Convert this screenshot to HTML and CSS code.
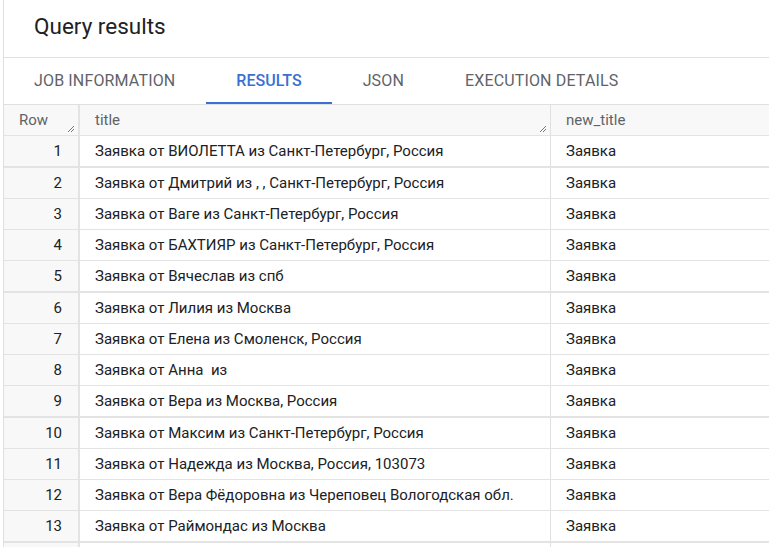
FILE: index.html
```html
<!DOCTYPE html>
<html lang="ru">
<head>
<meta charset="utf-8">
<title>Query results</title>
<link rel="stylesheet" href="styles.css">
</head>
<body>
<div class="page">
  <header class="title-bar"><h1 class="title">Query results</h1></header>
  <nav class="tabs">
    <div class="tab">JOB INFORMATION</div>
    <div class="tab active">RESULTS</div>
    <div class="tab">JSON</div>
    <div class="tab">EXECUTION DETAILS</div>
  </nav>
  <div class="grid">
    <div class="row head">
      <div class="cell num">Row<svg class="grip" width="8" height="8" viewBox="0 0 8 8"><path d="M1 7L7 1M4 7L7 4" stroke="#777" stroke-width="1"/></svg></div>
      <div class="cell txt">title<svg class="grip" width="8" height="8" viewBox="0 0 8 8"><path d="M1 7L7 1M4 7L7 4" stroke="#777" stroke-width="1"/></svg></div>
      <div class="cell txt last">new_title</div>
    </div>
    <div class="row thick"><div class="cell num">1</div><div class="cell txt">Заявка от ВИОЛЕТТА из Санкт-Петербург, Россия</div><div class="cell txt last">Заявка</div></div>
    <div class="row"><div class="cell num">2</div><div class="cell txt">Заявка от Дмитрий из , , Санкт-Петербург, Россия</div><div class="cell txt last">Заявка</div></div>
    <div class="row"><div class="cell num">3</div><div class="cell txt">Заявка от Ваге из Санкт-Петербург, Россия</div><div class="cell txt last">Заявка</div></div>
    <div class="row"><div class="cell num">4</div><div class="cell txt">Заявка от БАХТИЯР из Санкт-Петербург, Россия</div><div class="cell txt last">Заявка</div></div>
    <div class="row thick"><div class="cell num">5</div><div class="cell txt">Заявка от Вячеслав из спб</div><div class="cell txt last">Заявка</div></div>
    <div class="row"><div class="cell num">6</div><div class="cell txt">Заявка от Лилия из Москва</div><div class="cell txt last">Заявка</div></div>
    <div class="row"><div class="cell num">7</div><div class="cell txt">Заявка от Елена из Смоленск, Россия</div><div class="cell txt last">Заявка</div></div>
    <div class="row"><div class="cell num">8</div><div class="cell txt">Заявка от Анна&nbsp; из</div><div class="cell txt last">Заявка</div></div>
    <div class="row thick"><div class="cell num">9</div><div class="cell txt">Заявка от Вера из Москва, Россия</div><div class="cell txt last">Заявка</div></div>
    <div class="row"><div class="cell num">10</div><div class="cell txt">Заявка от Максим из Санкт-Петербург, Россия</div><div class="cell txt last">Заявка</div></div>
    <div class="row"><div class="cell num">11</div><div class="cell txt">Заявка от Надежда из Москва, Россия, 103073</div><div class="cell txt last">Заявка</div></div>
    <div class="row"><div class="cell num">12</div><div class="cell txt">Заявка от Вера Фёдоровна из Череповец Вологодская обл.</div><div class="cell txt last">Заявка</div></div>
    <div class="row thick"><div class="cell num">13</div><div class="cell txt">Заявка от Раймондас из Москва</div><div class="cell txt last">Заявка</div></div>
    <div class="row"><div class="cell num"></div><div class="cell txt"></div><div class="cell txt last"></div></div>
  </div>
</div>
</body>
</html>
```
FILE: styles.css
```css
html, body {
  margin: 0;
  padding: 0;
  overflow: hidden;
  background: #fff;
}
body {
  font-family: Roboto, "Liberation Sans", Arial, sans-serif;
  color: #202124;
}
.page {
  margin-left: 3px;
  border-left: 1px solid #e0e0e0;
  min-height: 547px;
}
.title-bar {
  height: 57px;
  border-bottom: 1px solid #e0e0e0;
  display: flex;
  align-items: center;
}
.title {
  margin: 0 0 5px 30px;
  font-size: 22.5px;
  font-weight: 400;
  color: #202124;
}
.tabs {
  display: flex;
  height: 46px;
  border-bottom: 1px solid #e0e0e0;
}
.tab {
  padding: 0 30.5px;
  display: flex;
  align-items: center;
  font-size: 16px;
  letter-spacing: 0.15px;
  color: #5f6368;
  border-bottom: 2px solid transparent;
  box-sizing: border-box;
}
.tab:first-child { padding-left: 30px; }
.tab.active {
  color: #3b6fd4;
  font-weight: 500;
  letter-spacing: 0;
  border-bottom-color: #3b6fd4;
}
.grid {
  display: flex;
  flex-direction: column;
}
.row {
  display: grid;
  grid-template-columns: 76px 471px 1fr;
  height: 30px;
  border-bottom: 1px solid #e3e3e3;
}
.row.thick { border-bottom-width: 2px; }
.row.head {
  background: #f8f8f8;
  border-bottom: 1px solid #e3e3e3;
}
.cell {
  display: flex;
  align-items: center;
  font-size: 15px;
  position: relative;
  white-space: nowrap;
  overflow: hidden;
}
.num {
  background: #f8f8f8;
  border-right: 2px solid #e3e3e3;
  justify-content: flex-end;
  padding-right: 16px;
}
.txt {
  padding-left: 15px;
  border-right: 1px solid #e0e0e0;
}
.txt.last { border-right: none; }
.head .cell { color: #5f6368; }
.head .num {
  justify-content: flex-start;
  padding-left: 15px;
  padding-right: 0;
}
.grip {
  position: absolute;
  right: 3px;
  bottom: 2px;
}
```
